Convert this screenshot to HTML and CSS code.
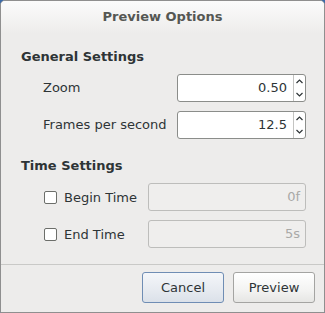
FILE: index.html
```html
<!DOCTYPE html>
<html lang="en">
<head>
  <meta charset="UTF-8">
  <title>Preview Options</title>
  <link rel="stylesheet" href="styles.css">
</head>
<body>
  <div class="dialog">
    <div class="titlebar">Preview Options</div>

    <div class="content">
      <h3 class="section-title">General Settings</h3>

      <div class="row">
        <span class="label">Zoom</span>
        <div class="spin">
          <span class="spin-value">0.50</span>
          <div class="spin-buttons">
            <span class="spin-btn">
              <svg width="7" height="5" viewBox="0 0 7 5"><path d="M0.5 4L3.5 1L6.5 4" fill="none" stroke="#2e3436" stroke-width="1.2"/></svg>
            </span>
            <span class="spin-btn">
              <svg width="7" height="5" viewBox="0 0 7 5"><path d="M0.5 1L3.5 4L6.5 1" fill="none" stroke="#2e3436" stroke-width="1.2"/></svg>
            </span>
          </div>
        </div>
      </div>

      <div class="row">
        <span class="label">Frames per second</span>
        <div class="spin">
          <span class="spin-value">12.5</span>
          <div class="spin-buttons">
            <span class="spin-btn">
              <svg width="7" height="5" viewBox="0 0 7 5"><path d="M0.5 4L3.5 1L6.5 4" fill="none" stroke="#2e3436" stroke-width="1.2"/></svg>
            </span>
            <span class="spin-btn">
              <svg width="7" height="5" viewBox="0 0 7 5"><path d="M0.5 1L3.5 4L6.5 1" fill="none" stroke="#2e3436" stroke-width="1.2"/></svg>
            </span>
          </div>
        </div>
      </div>

      <h3 class="section-title time-title">Time Settings</h3>

      <div class="row">
        <label class="check"><span class="check-box"></span>Begin Time</label>
        <div class="entry disabled">0f</div>
      </div>

      <div class="row">
        <label class="check"><span class="check-box"></span>End Time</label>
        <div class="entry disabled">5s</div>
      </div>
    </div>

    <div class="actions">
      <button class="btn btn-focus">Cancel</button>
      <button class="btn">Preview</button>
    </div>
  </div>
</body>
</html>
```

FILE: styles.css
```css
* {
  margin: 0;
  padding: 0;
  box-sizing: border-box;
}

html, body {
  width: 325px;
  height: 313px;
  overflow: hidden;
}

body {
  font-family: "DejaVu Sans", sans-serif;
  font-size: 13px;
  color: #2e3436;
  background: #3b6aa8;
}

.dialog {
  width: 325px;
  height: 313px;
  background: #edeceb;
  border: 1px solid #8f8f8f;
  border-radius: 5px 5px 0 0;
  display: flex;
  flex-direction: column;
}

.titlebar {
  height: 33px;
  line-height: 32px;
  text-align: center;
  font-weight: bold;
  color: #555753;
  background: linear-gradient(#fbfbfb, #f0efee 80%, #edeceb);
  border-radius: 4px 4px 0 0;
}

.content {
  padding: 15px 18px 0 20px;
  flex: 1;
}

.section-title {
  font-size: 13px;
  font-weight: bold;
  line-height: 16px;
  margin-bottom: 9px;
}

.time-title {
  margin-top: 19px;
}

.row {
  display: flex;
  align-items: center;
  justify-content: space-between;
  height: 28px;
  padding-left: 22px;
  margin-bottom: 9px;
}

.label {
  line-height: 16px;
}

.spin {
  width: 129px;
  height: 28px;
  display: flex;
  background: #fff;
  border: 1px solid #8b8d8a;
  border-radius: 3px;
}

.spin-value {
  flex: 1;
  text-align: right;
  line-height: 26px;
  padding-right: 6px;
}

.spin-buttons {
  width: 12px;
  display: flex;
  flex-direction: column;
  border-left: 1px solid #c4c4c2;
}

.spin-btn {
  flex: 1;
  display: flex;
  align-items: center;
  justify-content: center;
}

.check {
  display: flex;
  align-items: center;
  margin-left: 1px;
}

.check-box {
  width: 13px;
  height: 13px;
  border: 1px solid #6c6e6a;
  border-radius: 2px;
  background: #fff;
  margin-right: 7px;
}

.entry {
  width: 158px;
  height: 28px;
  line-height: 26px;
  text-align: right;
  padding-right: 5px;
  border: 1px solid #bdbdbb;
  border-radius: 3px;
}

.entry.disabled {
  color: #a9a9a7;
  background: #efeeed;
}

.actions {
  display: flex;
  justify-content: flex-end;
  gap: 9px;
  border-top: 1px solid #c9c9c7;
  margin-top: 6px;
  padding: 7px 9px 9px 0;
}

.btn {
  width: 82px;
  height: 31px;
  font-family: "DejaVu Sans", sans-serif;
  font-size: 13px;
  color: #2e3436;
  border: 1px solid #a4a4a2;
  border-radius: 3px;
  background: linear-gradient(#ffffff, #f3f3f2 60%, #e6e6e4);
}

.btn-focus {
  border-color: #6f8db4;
  background: linear-gradient(#f4f6f9, #e6eaf0 60%, #dbe1e9);
}
```
